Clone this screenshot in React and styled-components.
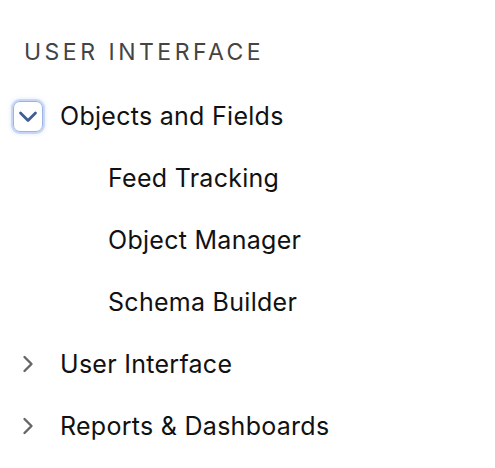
import React from "react";
import styled, { createGlobalStyle } from "styled-components";

const Global = createGlobalStyle`
  html, body { margin: 0; padding: 0; background: #fff; }
  body { font-family: Inter, "Noto Sans", sans-serif; -webkit-font-smoothing: antialiased; }
`;

const Nav = styled.nav`
  display: flex;
  flex-direction: column;
  padding: 37px 0 0 0;
`;

const Heading = styled.h2`
  margin: 0 0 0 24px;
  font-size: 23px;
  font-weight: 400;
  letter-spacing: 3.5px;
  color: #444;
  line-height: 30px;
`;

const List = styled.ul`
  list-style: none;
  margin: 18px 0 0 0;
  padding: 0;
  display: flex;
  flex-direction: column;
`;

const Row = styled.li`
  display: flex;
  align-items: center;
  height: 62px;
  padding-left: ${p => (p.$sub ? 108 : 13)}px;
  font-size: 25px;
  letter-spacing: 0.28px;
  color: #111;
`;

const Toggle = styled.span`
  width: 30px;
  height: 31px;
  box-sizing: border-box;
  display: flex;
  align-items: center;
  justify-content: center;
  margin-right: 17px;
  border-radius: 7px;
  ${p => p.$focus && `
    border: 1px solid #9db4e0;
    box-shadow: 0 0 0 2px rgba(140, 170, 230, 0.35), 0 0 4px 2px rgba(120,160,230,0.25);
  `}
`;

const Label = styled.span`
  white-space: nowrap;
`;

const ChevronDown = () => (
  <svg width="20" height="13" viewBox="0 0 20 13">
    <path d="M2.5 3 L10 10.5 L17.5 3" fill="none" stroke="#3f5e94" strokeWidth="2.8" strokeLinecap="round" strokeLinejoin="round" />
  </svg>
);

const ChevronRight = () => (
  <svg width="14" height="20" viewBox="0 0 14 20">
    <path d="M3.5 3 L10.5 10 L3.5 17" fill="none" stroke="#666" strokeWidth="2.4" strokeLinecap="round" strokeLinejoin="round" />
  </svg>
);

export default function App() {
  return (
    <>
      <Global />
      <Nav>
        <Heading>USER INTERFACE</Heading>
        <List>
          <Row>
            <Toggle $focus><ChevronDown /></Toggle>
            <Label>Objects and Fields</Label>
          </Row>
          <Row $sub><Label>Feed Tracking</Label></Row>
          <Row $sub><Label>Object Manager</Label></Row>
          <Row $sub><Label>Schema Builder</Label></Row>
          <Row>
            <Toggle><ChevronRight /></Toggle>
            <Label>User Interface</Label>
          </Row>
          <Row>
            <Toggle><ChevronRight /></Toggle>
            <Label>Reports &amp; Dashboards</Label>
          </Row>
        </List>
      </Nav>
    </>
  );
}
